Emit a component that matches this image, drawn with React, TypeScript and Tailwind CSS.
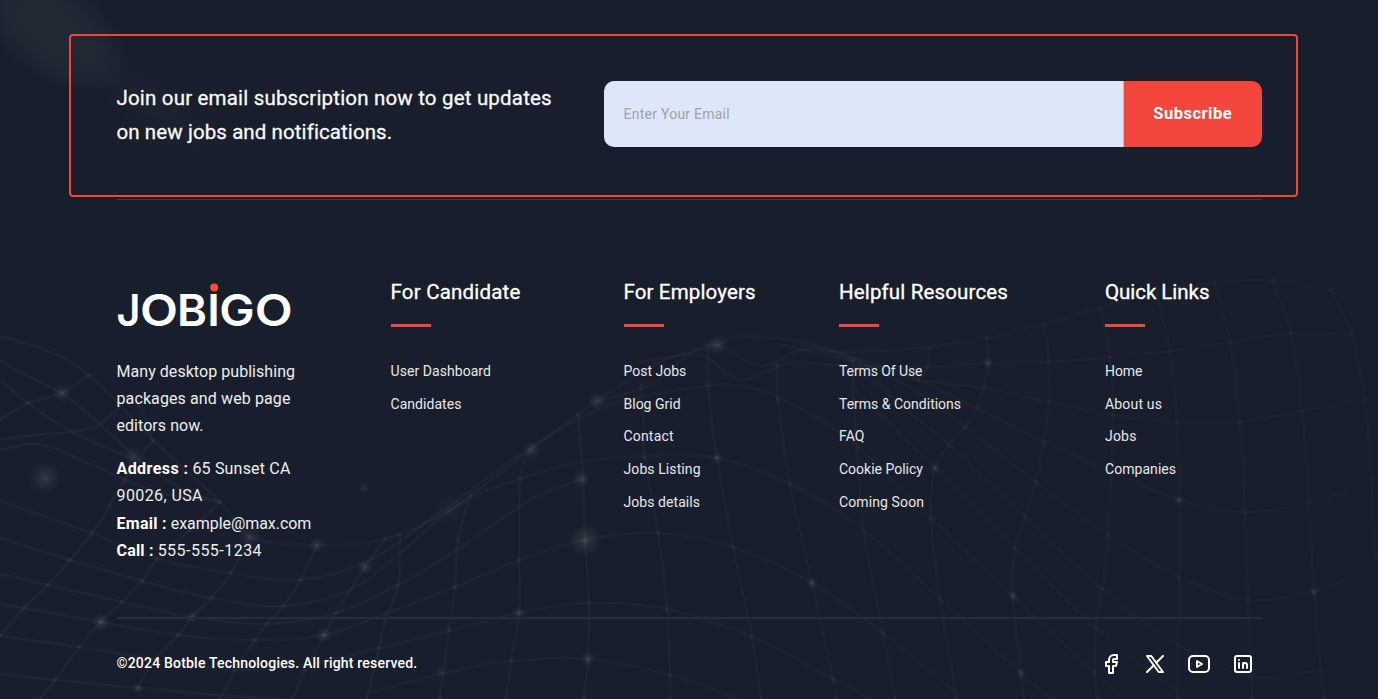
import type { ReactNode } from "react";

type Point = [number, number];

const WAVES: string[] = [
  "0,336 48,351 89,375 153,440 220,502 250,537 317,545 385,539 450,510 530,450 597,401 660,362 717,345 740,336 810,343 850,360 890,392",
  "0,360 17,371 62,393 100,424 135,456 180,488 220,502",
  "0,380 28,403 72,432 150,466",
  "0,440 42,434 72,432 100,424 133,400 153,440",
  "0,450 40,444 92,465 157,492 220,502",
  "0,501 23,509 92,533 157,559 231,573 301,580 370,560 450,505 533,446 610,405 700,387 740,386 780,398 850,440 931,518 1013,596 1095,673 1125,699",
  "0,538 70,560 142,581 211,598 283,606 350,590 398,555 458,505 520,479 581,462 645,456 717,458 790,484 864,530 940,599 1021,673 1050,699",
  "0,574 48,585 122,602 192,617 267,624 336,613 398,585 460,548 530,500 583,479",
  "0,604 24,608 101,622 178,635 255,640 324,635 390,612 460,585 519,560 585,540 658,533 733,547 812,583 883,633 957,694",
  "0,636 79,647 160,660 235,670 305,665 380,648 460,628 519,613 590,603 667,609 752,637 836,680 870,699",
  "0,674 55,680 138,688 220,695 293,699",
  "367,693 449,672 511,661 588,659 670,675 740,699",
  "597,401 650,385 708,345 760,366 800,350 850,352 918,348 987,338 1044,324 1100,308 1160,291 1214,283 1272,280 1331,290",
  "640,362 700,355 740,380 790,363 850,366 928,367 988,363 1049,362 1110,357 1170,351 1230,342 1291,333 1351,335",
  "780,345 850,360 918,380 984,388 1049,402 1113,415 1177,422 1240,422 1302,411 1365,400",
  "800,343 900,372 977,408 1044,442 1108,470 1179,500 1245,512 1309,503 1350,490",
  "840,352 918,392 965,427 1036,482 1108,535 1179,577 1248,600 1314,592 1345,580",
  "860,372 949,445 1025,517 1102,589 1178,645 1252,677 1321,670",
  "850,385 935,468 1015,548 1096,628 1177,692",
];

const RIBS: string[] = [
  "89,375 62,393 28,403 0,420",
  "153,440 125,480 110,505 92,533 70,560 48,585 24,608 0,636",
  "220,502 190,530 157,559 142,581 122,602 101,622 79,647 55,680 40,699",
  "250,537 231,573 211,598 192,617 178,635 155,660 138,688",
  "317,545 301,580 283,606 267,624 255,640 235,670 220,699",
  "385,539 365,567 336,613 324,635 305,670 293,699",
  "400,535 398,585 385,620 379,648 367,699",
  "470,495 458,540 455,587 449,629 440,699",
  "530,450 520,479 519,560 519,613 511,661 506,699",
  "578,415 580,440 583,479 585,540 589,603 588,659 584,699",
  "641,385 643,410 645,458 658,533 667,609 670,675 670,699",
  "708,345 708,385 717,458 733,547 752,637 761,699",
  "777,365 778,400 790,484 812,583 833,680 836,699",
  "853,360 854,400 857,450 864,533 883,633 895,699",
  "930,348 928,367 918,380",
  "987,338 988,363 984,388 977,408 965,427 949,445 935,468 931,518 940,599 957,699",
  "1044,324 1049,362 1049,402 1044,442 1036,482 1025,517 1015,548 1013,596 1021,673 1024,699",
  "1100,308 1110,357 1113,415 1108,535 1102,589 1096,628 1095,673 1097,699",
  "1157,295 1170,351 1177,422 1179,500 1179,577 1178,645 1177,699",
  "1214,283 1230,342 1240,422 1245,512 1248,600 1252,699",
  "1272,280 1291,333 1302,411 1309,503 1314,592 1321,670 1323,699",
  "1331,290 1351,333 1365,400 1371,480 1376,560",
];

const GLOWS: [number, number, number, number][] = [
  [45, 478, 16, 0.13], [62, 393, 10, 0.1], [133, 456, 9, 0.1], [101, 622, 9, 0.14],
  [250, 537, 12, 0.1], [317, 545, 8, 0.1], [365, 567, 8, 0.12], [324, 635, 8, 0.12],
  [585, 540, 16, 0.14], [597, 401, 9, 0.12], [532, 450, 9, 0.12], [581, 479, 9, 0.12],
  [717, 345, 10, 0.12], [717, 458, 6, 0.12], [812, 583, 6, 0.1], [519, 613, 7, 0.1],
  [588, 659, 8, 0.1], [935, 468, 6, 0.1], [988, 363, 6, 0.1], [1013, 596, 6, 0.1],
  [1021, 673, 5, 0.1], [1179, 500, 6, 0.09], [1314, 592, 5, 0.1], [364, 488, 5, 0.1],
  [138, 688, 6, 0.1], [440, 672, 6, 0.08], [192, 617, 7, 0.09], [450, 510, 16, 0.04],
];

function parse(points: string): Point[] {
  return points.split(" ").map((p) => p.split(",").map(Number) as Point);
}

/** Catmull-Rom spline through the points, written as cubic Béziers. */
function smooth(points: string): string {
  const p = parse(points);
  let d = `M${p[0][0]} ${p[0][1]}`;
  for (let i = 0; i < p.length - 1; i++) {
    const a = p[i - 1] ?? p[i];
    const b = p[i];
    const c = p[i + 1];
    const e = p[i + 2] ?? c;
    d += `C${b[0] + (c[0] - a[0]) / 6} ${b[1] + (c[1] - a[1]) / 6} ${c[0] - (e[0] - b[0]) / 6} ${c[1] - (e[1] - b[1]) / 6} ${c[0]} ${c[1]}`;
  }
  return d;
}

function MeshBackground() {
  return (
    <svg className="absolute inset-0 h-full w-full" viewBox="0 0 1378 699" fill="none" aria-hidden="true">
      <defs>
        <radialGradient id="glow">
          <stop offset="0" stopColor="#e4f4ea" stopOpacity="1" />
          <stop offset="0.4" stopColor="#e4f4ea" stopOpacity="0.5" />
          <stop offset="1" stopColor="#e4f4ea" stopOpacity="0" />
        </radialGradient>
        <radialGradient id="haze">
          <stop offset="0" stopColor="#e4f4ea" stopOpacity="1" />
          <stop offset="0.6" stopColor="#e4f4ea" stopOpacity="0.75" />
          <stop offset="1" stopColor="#e4f4ea" stopOpacity="0" />
        </radialGradient>
        <linearGradient id="fade" x1="0" y1="0" x2="1378" y2="0" gradientUnits="userSpaceOnUse">
          <stop offset="0" stopColor="#dff0ee" stopOpacity="0.036" />
          <stop offset="0.5" stopColor="#dff0ee" stopOpacity="0.028" />
          <stop offset="1" stopColor="#dff0ee" stopOpacity="0.014" />
        </linearGradient>
      </defs>
      <ellipse cx="52" cy="28" rx="90" ry="50" fill="url(#haze)" opacity="0.055" transform="rotate(38 52 28)" />
      <ellipse cx="155" cy="105" rx="110" ry="32" fill="url(#glow)" opacity="0.025" transform="rotate(38 155 105)" />
      <g stroke="url(#fade)" strokeWidth="2.2">
        {WAVES.map((w) => <path key={w} d={smooth(w)} />)}
        {RIBS.map((r) => <path key={r} d={smooth(r)} />)}
      </g>
      {RIBS.flatMap((r) => parse(r)).map(([x, y], i) => (
        <circle key={i} cx={x} cy={y} r="2.4" fill="#dff0ee" opacity={x > 850 ? 0.025 : 0.035} />
      ))}
      {GLOWS.map(([x, y, r, o]) => (
        <circle key={`${x}-${y}`} cx={x} cy={y} r={r} fill="url(#glow)" opacity={o} />
      ))}
    </svg>
  );
}

const LOGO_LETTERS: { char: string; x: number; length: number }[] = [
  { char: "J", x: 0, length: 24 },
  { char: "O", x: 23.4, length: 38 },
  { char: "B", x: 60.6, length: 30 },
  { char: "I", x: 90.8, length: 12.6 },
  { char: "G", x: 102.8, length: 35.4 },
  { char: "O", x: 138.2, length: 38 },
];

function Logo() {
  return (
    <svg className="-ml-1 block h-[56px] w-[186px] overflow-visible" viewBox="-4 0 186 56" role="img" aria-label="Jobigo">
      {LOGO_LETTERS.map(({ char, x, length }) => (
        <text
          key={x}
          className="fill-white font-['Inter',sans-serif] text-[44px] font-semibold"
          x={x - 0.5}
          y="43"
          textLength={length}
          lengthAdjust="spacingAndGlyphs"
        >
          {char}
        </text>
      ))}
      <circle cx="97.2" cy="4.4" r="4" fill="#ff4a2a" />
    </svg>
  );
}

type LinkItem = { label: string; tracking?: string };

const COLUMNS: { title: string; tracking: string; links: LinkItem[] }[] = [
  {
    title: "For Candidate",
    tracking: "tracking-[0.2px]",
    links: [{ label: "User Dashboard", tracking: "tracking-[0.06px]" }, { label: "Candidates", tracking: "tracking-[0.05px]" }],
  },
  {
    title: "For Employers",
    tracking: "tracking-[0.13px]",
    links: [
      { label: "Post Jobs" },
      { label: "Blog Grid" },
      { label: "Contact", tracking: "tracking-[0.18px]" },
      { label: "Jobs Listing", tracking: "tracking-[0.09px]" },
      { label: "Jobs details", tracking: "tracking-[0.06px]" },
    ],
  },
  {
    title: "Helpful Resources",
    tracking: "tracking-[0.15px]",
    links: [
      { label: "Terms Of Use", tracking: "tracking-[-0.09px]" },
      { label: "Terms & Conditions" },
      { label: "FAQ", tracking: "tracking-[0.1px]" },
      { label: "Cookie Policy" },
      { label: "Coming Soon", tracking: "tracking-[0.11px]" },
    ],
  },
  {
    title: "Quick Links",
    tracking: "tracking-[-0.04px]",
    links: [
      { label: "Home", tracking: "tracking-[-0.05px]" },
      { label: "About us", tracking: "tracking-[0.18px]" },
      { label: "Jobs", tracking: "tracking-[0.2px]" },
      { label: "Companies", tracking: "tracking-[0.05px]" },
    ],
  },
];

function SocialIcon({ label, children }: { label: string; children: ReactNode }) {
  return (
    <a href="#" aria-label={label}>
      <svg
        className="block size-6"
        viewBox="0 0 24 24"
        fill="none"
        stroke="currentColor"
        strokeWidth="2"
        strokeLinecap="round"
        strokeLinejoin="round"
      >
        {children}
      </svg>
    </a>
  );
}

export default function App() {
  return (
    <footer className="relative h-[699px] w-full overflow-hidden bg-[#181e2b] font-['Roboto',sans-serif] text-white">
      <MeshBackground />
      <div className="relative flex h-full flex-col pt-[33.5px]">
        <section className="ml-[69px] flex h-[163.5px] w-[1229.4px] shrink-0 items-start justify-between rounded-[4px] border-2 border-[#f4452f] pt-[45.5px] pr-[34.4px] pl-[45.5px]">
          <p className="text-[20.5px] leading-[34px] text-[#f7f8fb] [-webkit-text-stroke:0.3px]">
            <span className="block tracking-[0.18px]">Join our email subscription now to get updates</span>
            <span className="block tracking-[0.09px]">on new jobs and notifications.</span>
          </p>
          <form className="flex h-[66px] w-[658.4px] overflow-hidden rounded-[10px]">
            <input
              className="min-w-0 flex-1 border-r border-[#b9bec9] bg-[#dce7f7] pl-5 text-[14px] tracking-[0.24px] outline-none placeholder:text-[#a3a3a3]"
              type="email"
              placeholder="Enter Your Email"
            />
            <button className="w-[138.5px] bg-[#f3463c] text-[16.5px] font-bold tracking-[0.5px]" type="button">
              Subscribe
            </button>
          </form>
        </section>

        <div className="mx-[116.5px] mt-[2px] h-px w-[1145.5px] shrink-0 bg-white/15" />

        <div className="ml-[116.5px] grid grid-cols-[274px_233px_215.5px_266px_1fr] pt-[79px]">
          <div className="pt-[4px] text-[16px] leading-[27.2px] text-[#eceef2]">
            <Logo />
            <p className="mt-[18.5px]">
              <span className="block tracking-[0.05px]">Many desktop publishing</span>
              <span className="block tracking-[0.11px]">packages and web page</span>
              <span className="block tracking-[0.05px]">editors now.</span>
            </p>
            <address className="mt-4 not-italic">
              <span className="block">
                <b className="tracking-[0.43px] text-white">Address :</b> <span className="tracking-[0.19px]">65 Sunset CA</span>
              </span>
              <span className="block tracking-[0.4px]">90026, USA</span>
              <span className="block">
                <b className="tracking-[0.27px] text-white">Email :</b> <span className="tracking-[-0.05px]">example@max.com</span>
              </span>
              <span className="block">
                <b className="tracking-[0.2px] text-white">Call :</b> <span className="tracking-[0.47px]">555-555-1234</span>
              </span>
            </address>
          </div>

          {COLUMNS.map((column) => (
            <nav key={column.title}>
              <h4 className={`text-[20.5px] leading-[26px] [-webkit-text-stroke:0.3px] ${column.tracking}`}>{column.title}</h4>
              <div className="mt-[19px] h-[3px] w-10 bg-[#f3463c]" />
              <ul className="mt-[28px]">
                {column.links.map((link) => (
                  <li key={link.label} className="flex h-[32.8px] items-center">
                    <a href="#" className={`text-[14px] text-[#e6e8ec] ${link.tracking ?? "tracking-normal"}`}>
                      {link.label}
                    </a>
                  </li>
                ))}
              </ul>
            </nav>
          ))}
        </div>

        <div className="mt-auto ml-[116.5px] h-[82px] w-[1145.5px] shrink-0 border-t-2 border-[#262c38]">
          <div className="flex items-center justify-between pt-[32px] pr-[7.5px]">
            <p className="text-[14px] font-medium tracking-[0.2px]">©2024 Botble Technologies. All right reserved.</p>
            <div className="flex gap-5 pt-px">
              <SocialIcon label="Facebook">
                <path d="M7 10v4h3v7h4v-7h3l1 -4h-4v-2a1 1 0 0 1 1 -1h3v-4h-3a5 5 0 0 0 -5 5v2h-3" />
              </SocialIcon>
              <SocialIcon label="X">
                <path d="M4 4l11.733 16h4.267l-11.733 -16z" />
                <path d="M4 20l6.768 -6.768m2.46 -2.46l6.772 -6.772" />
              </SocialIcon>
              <SocialIcon label="YouTube">
                <path d="M2 8a4 4 0 0 1 4 -4h12a4 4 0 0 1 4 4v8a4 4 0 0 1 -4 4h-12a4 4 0 0 1 -4 -4v-8z" />
                <path d="M10 9l5 3l-5 3z" />
              </SocialIcon>
              <SocialIcon label="LinkedIn">
                <path d="M4 4m0 2a2 2 0 0 1 2 -2h12a2 2 0 0 1 2 2v12a2 2 0 0 1 -2 2h-12a2 2 0 0 1 -2 -2z" />
                <path d="M8 11v5" />
                <path d="M8 8v.01" />
                <path d="M12 16v-5" />
                <path d="M16 16v-3a2 2 0 0 0 -4 0" />
              </SocialIcon>
            </div>
          </div>
        </div>
      </div>
    </footer>
  );
}
